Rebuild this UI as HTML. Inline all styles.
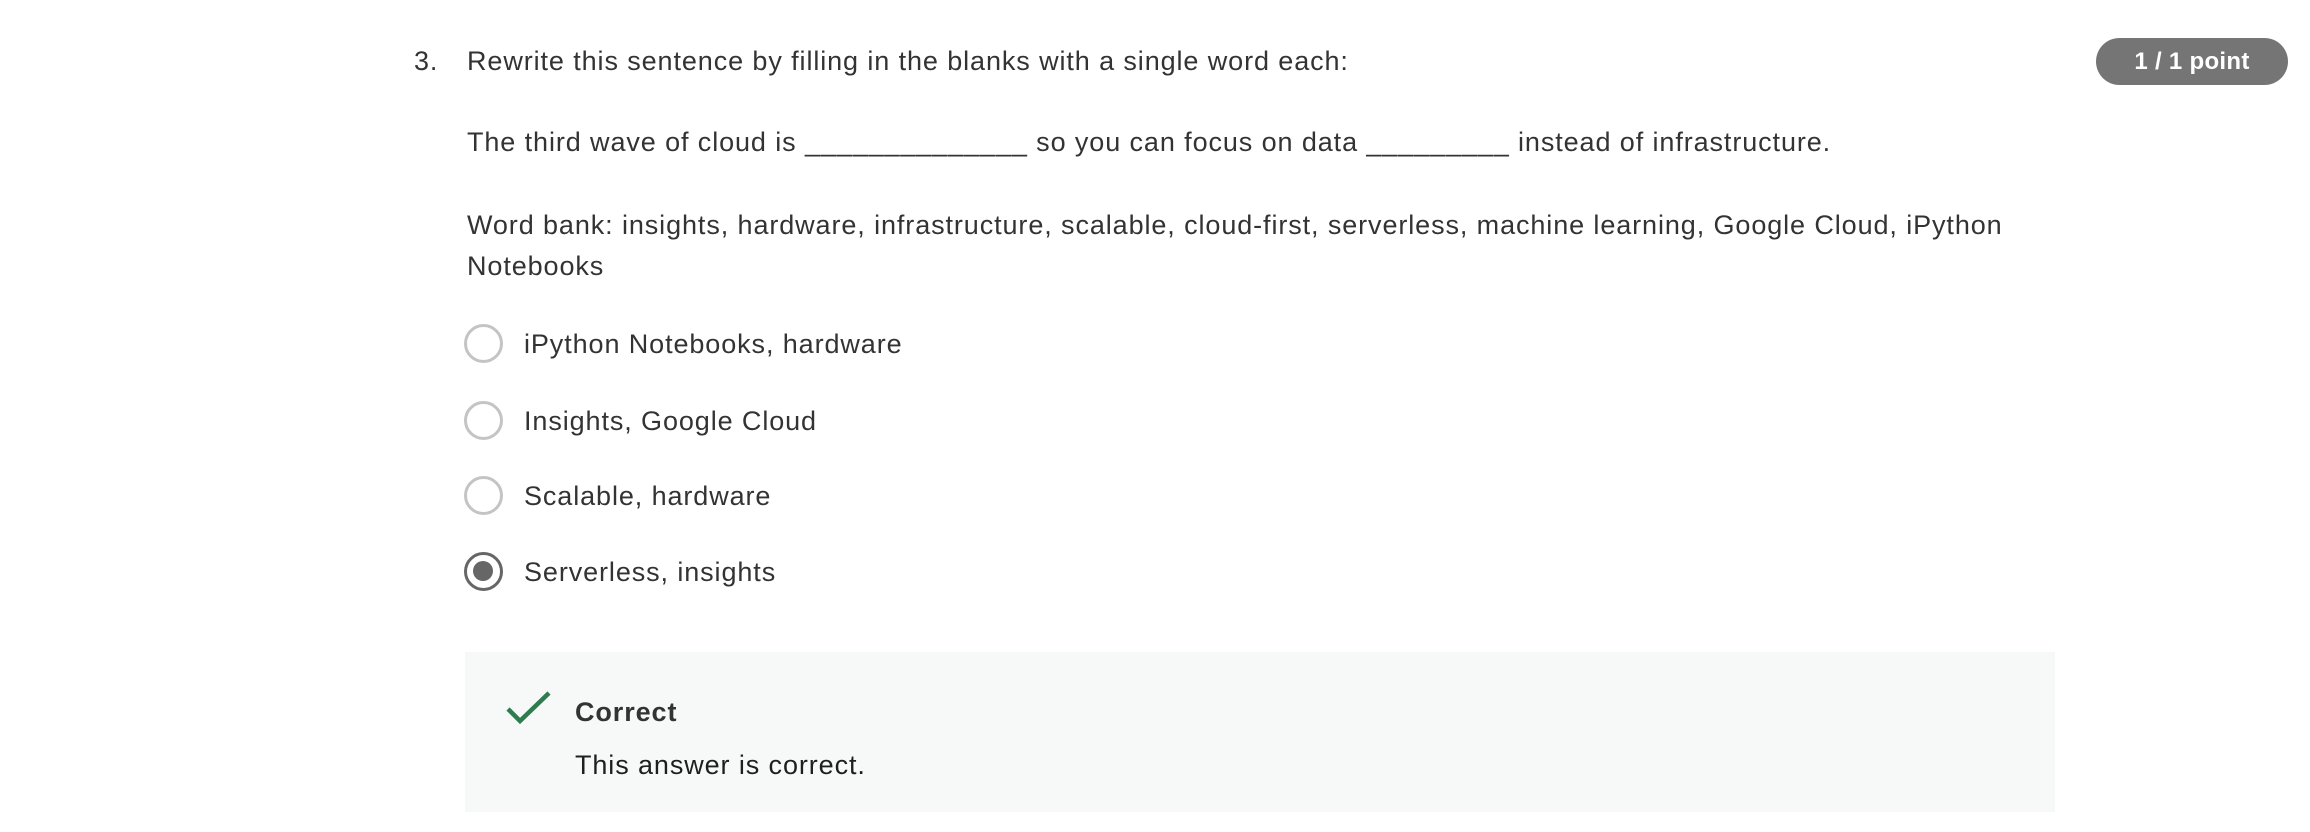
<!DOCTYPE html>
<html><head><meta charset="utf-8"><style>
*{margin:0;padding:0;box-sizing:border-box}
body{width:2310px;height:832px;background:#fff;font-family:"Liberation Sans",sans-serif;color:#333;font-size:27px;letter-spacing:0.9px;position:relative;overflow:hidden}
.t{position:absolute;line-height:40px;white-space:nowrap}
.badge{position:absolute;left:2096px;top:38px;width:192px;height:47px;border-radius:24px;background:#757575;color:#fff;font-weight:bold;font-size:24px;letter-spacing:0.3px;text-align:center;line-height:47px}
.r{position:absolute;left:464px;width:39px;height:39px;border-radius:50%;border:3.5px solid #c4c4c4}
.r.s{border-color:#666}
.r.s::after{content:"";position:absolute;left:6px;top:6px;width:20px;height:20px;border-radius:50%;background:#666}
.fb{position:absolute;left:465px;top:652px;width:1590px;height:160px;background:#f7f9f8}
</style></head><body>
<div class="t" style="left:414px;top:41px">3.</div>
<div class="t" style="left:467px;top:41px">Rewrite this sentence by filling in the blanks with a single word each:</div>
<div class="badge">1 / 1 point</div>
<div class="t" style="left:467px;top:122px">The third wave of cloud is ______________ so you can focus on data _________ instead of infrastructure.</div>
<div class="t" style="left:467px;top:205px">Word bank: insights, hardware, infrastructure, scalable, cloud-first, serverless, machine learning, Google Cloud, iPython</div>
<div class="t" style="left:467px;top:246px">Notebooks</div>
<div class="r" style="top:324px"></div><div class="t" style="left:524px;top:324px">iPython Notebooks, hardware</div>
<div class="r" style="top:401px"></div><div class="t" style="left:524px;top:401px">Insights, Google Cloud</div>
<div class="r" style="top:476px"></div><div class="t" style="left:524px;top:476px">Scalable, hardware</div>
<div class="r s" style="top:552px"></div><div class="t" style="left:524px;top:552px">Serverless, insights</div>
<div class="fb"></div>
<svg style="position:absolute;left:505px;top:690px" width="48" height="36" viewBox="0 0 48 36"><path d="M3 19 L15 31 L44 3" fill="none" stroke="#2e7d4f" stroke-width="4.5"/></svg>
<div class="t" style="left:575px;top:692px;font-weight:bold;color:#333">Correct</div>
<div class="t" style="left:575px;top:745px;color:#1f1f1f">This answer is correct.</div>
</body></html>
